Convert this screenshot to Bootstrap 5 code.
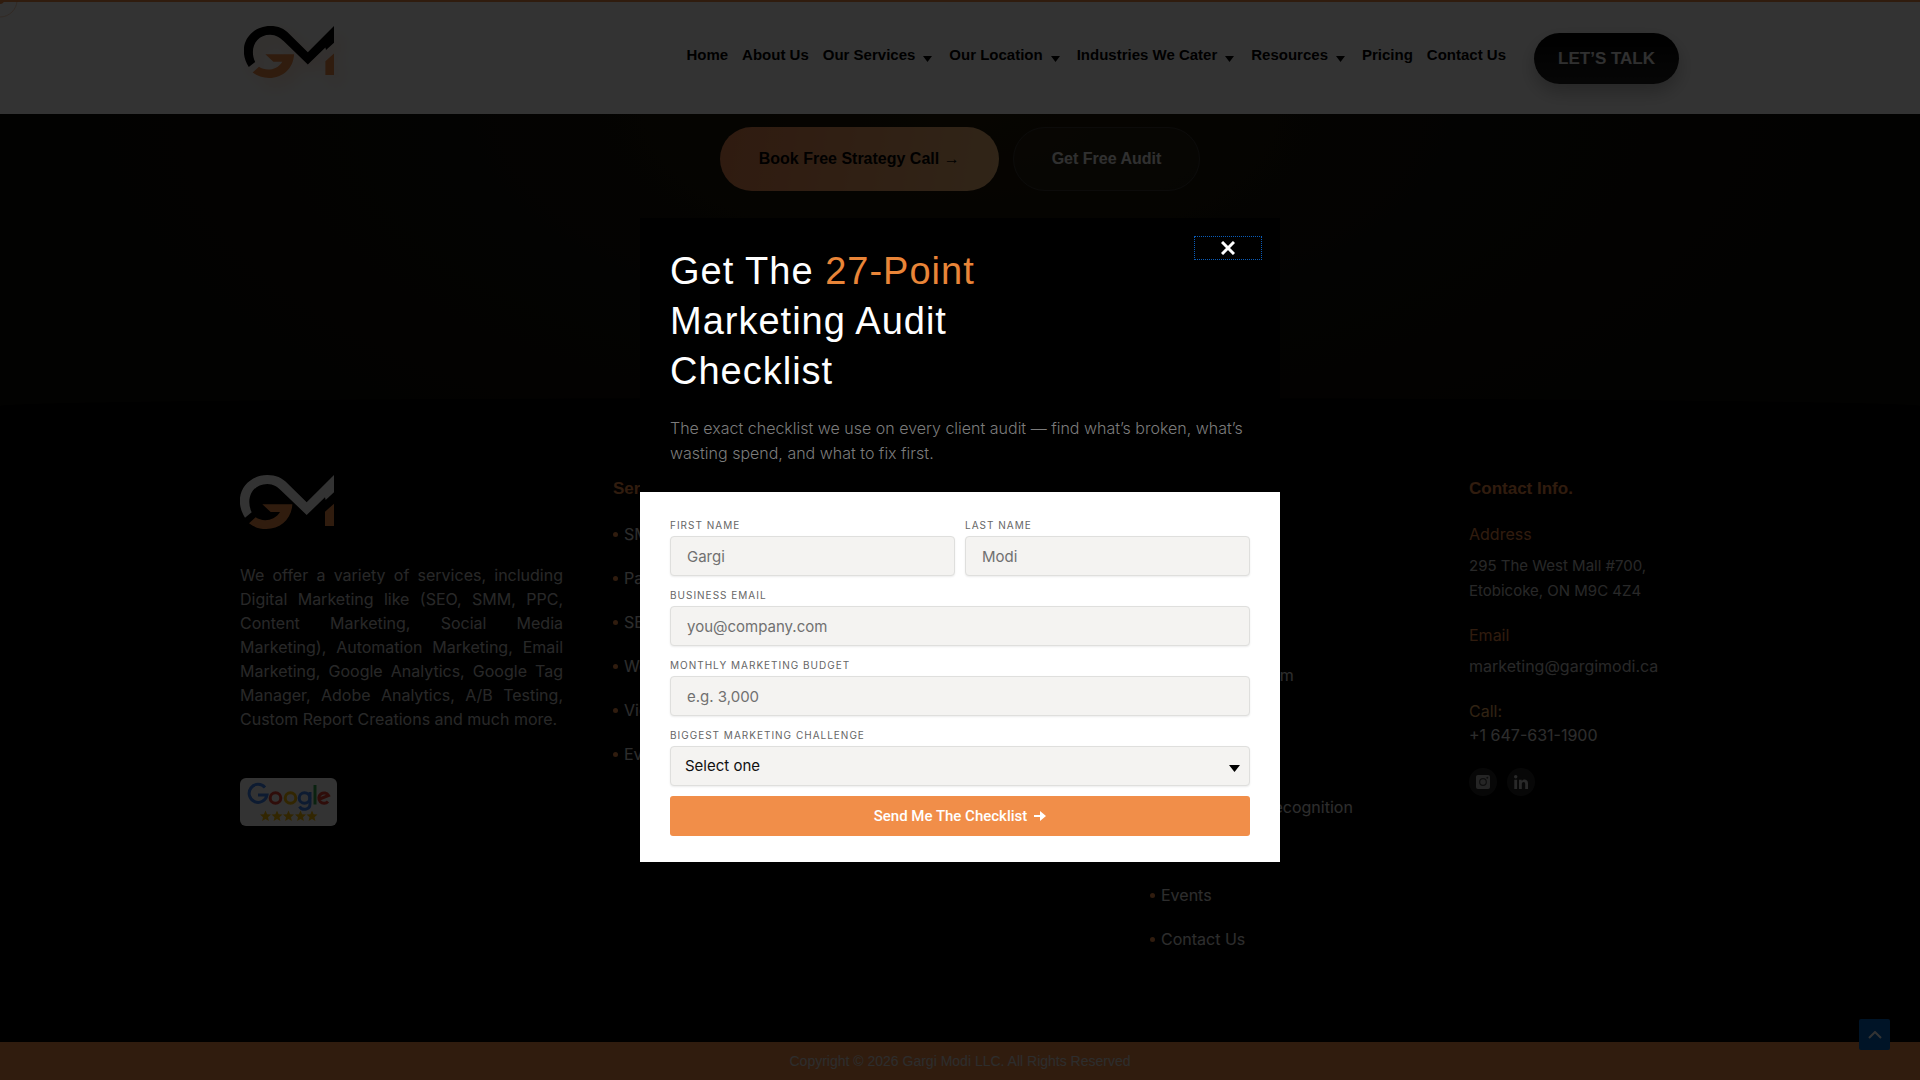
<!DOCTYPE html>
<html lang="en">
<head>
<meta charset="utf-8">
<meta name="viewport" content="width=device-width, initial-scale=1">
<title>Gargi Modi</title>
<link href="https://cdn.jsdelivr.net/npm/bootstrap@5.3.0/dist/css/bootstrap.min.css" rel="stylesheet">
<style>
:root{--brand:#ee8b48;--sans:"Liberation Sans",Arial,sans-serif;--geo:Inter,"Open Sans",sans-serif}
body{font-family:var(--geo);background:#000;min-height:100vh;overflow:hidden}
a{text-decoration:none}
.site-header{height:114px;background:#fff;border-top:2px solid var(--brand)}
.wrap{width:100%;max-width:1440px;margin:0 auto}
.site-header .wrap{padding:24px 1px 0 4px}
.logo-top{filter:drop-shadow(6px 8px 8px rgba(238,139,72,.25))}
.main-nav{gap:14px;font:700 15px/20px var(--sans);margin:19px 28px 0 0}
.main-nav a{color:#000}
.main-nav .has-menu{display:flex;gap:8px;padding-right:3px}
.main-nav svg{margin-top:11px}
.talk-btn{background:linear-gradient(#000,#222);color:#eee;border:0;border-radius:26px;padding:13px 24px;margin-top:7px;font:700 17px/25px var(--sans);box-shadow:0 8px 18px rgba(0,0,0,.25)}
.hero{height:292px;background:radial-gradient(ellipse 45% 130% at 50% 0,#241a08,#12100a 60%,#0e0c07);padding-top:13px;gap:14px}
.hero-btn{font:700 16px/24px var(--sans);padding:19px 38px;border-radius:32px;height:64px;border:1px solid transparent}
.hero-main{background:linear-gradient(100deg,#ec8650,#f0b878) border-box;color:#000}
.hero-alt{background:rgba(255,255,255,.04);border-color:#3c3a36;color:#f0f0f0}
.site-footer{background:#000;height:644px;margin-top:-8px;border-radius:50% 50% 0 0/8px 8px 0 0;position:relative}
.site-footer .wrap{padding:77px 0 0;display:grid;grid-template-columns:373px 537px 319px 1fr}
.about-text{width:323px;font-size:16px;line-height:24px;color:#c8c8c8;font-weight:400;margin:34px 0 47px}
.about-text span{display:block;text-align-last:justify;white-space:nowrap}
.about-text span:last-child{text-align-last:left}
.foot-title{font:700 17px/20px var(--sans);color:var(--brand);margin:4px 0 0}
.links{list-style:none;padding:0;margin:13px 0 0;font-weight:400;font-size:16px}
.links li{height:44px;display:flex;align-items:center;gap:6px}
.links li::before{content:"";width:5px;height:5px;border-radius:50%;background:var(--brand)}
.links a{color:#e0e0e0}
.links .later{margin-top:88px}
.links .next{margin-top:44px}
.links-more{margin-top:178px}
.contact-head{color:var(--brand);font-size:16px;font-weight:400;line-height:24px;margin:20px 0 0}
.contact-head.first{margin-top:23px}
.contact-head.call{color:#f0b060}
.contact-text{color:#c8c8c8;font-size:16px;line-height:25px;margin:7px 0 0;display:block}
.contact-text.phone{margin:0;color:#e0e0e0}
address.contact-text{font-size:15px}
.socials{gap:10px;margin-top:20px}
.soc{width:28px;height:28px;border-radius:50%;background:#262626;display:flex;align-items:center;justify-content:center}
.copy-bar{height:38px;background:var(--brand);font:14px/38px var(--sans);color:#e0e0e0;text-align:center}
.to-top{position:fixed;right:30px;bottom:30px;width:31px;height:31px;background:#0064c3;border:0;border-radius:2px;padding:0;display:flex;align-items:center;justify-content:center}
.ring{position:fixed;top:0;left:0}
.shade{position:fixed;inset:0;background:rgba(0,0,0,.8)}
.popup{position:fixed;inset:0;display:flex;align-items:center;justify-content:center}
.popup-box{width:640px}
.popup-top{background:#000;padding:28px 30px 26px;position:relative}
.popup-top h2{font:400 38px/50px var(--sans);letter-spacing:1px;color:#fff;margin:0 0 20px;max-width:340px}
.popup-top h2 em{font-style:normal;color:#e98538}
.popup-top p{font-size:16px;line-height:25px;font-weight:300;color:#7c7c7c;margin:0}
.x-btn{position:absolute;top:18px;right:18px;width:68px;height:24px;background:none;border:1px dotted #0a5cb8;padding:0;display:flex;align-items:center;justify-content:center}
.popup-form{background:#fff;padding:24px 30px 26px;display:grid;grid-template-columns:1fr 1fr;gap:10px}
.wide{grid-column:1/-1}
.popup-form label{display:block;font-size:10px;line-height:18px;letter-spacing:1px;font-weight:400;color:#666;text-transform:uppercase;margin-bottom:2px}
.popup-form .fld{display:block;width:100%;height:40px;background-color:#f4f3f1;border:1px solid #dfdfdd;border-radius:4px;padding:0 16px;font-size:15px;color:#111;box-shadow:0 1px 2px rgba(0,0,0,.08)}
.popup-form .fld::placeholder{color:#707070;opacity:1}
.popup-form select.fld{appearance:none;padding-left:14px}
.pick{position:relative}
.pick svg{position:absolute;right:10px;top:19px;pointer-events:none}
.send-btn{height:40px;background:#f18e49;color:#fff;border:0;border-radius:3px;font:500 15px/20px Roboto,sans-serif;display:flex;align-items:center;justify-content:center;gap:7px}
</style>
</head>
<body>
<svg width="0" height="0" class="position-absolute" aria-hidden="true">
<symbol id="gm-line" viewBox="0 0 282 162"><path d="M15 128C-26 62 20 0 82 0c26 0 44 8 60 25l58 57 82-82v52l-25 23-2-8-55 53-76-73C114 37 100 27 82 27 36 27 16 72 35 112z"/></symbol>
<symbol id="gm-accent" viewBox="0 0 282 162"><path d="M67 88h90c-2 44-36 74-78 74-20 0-38-6-52-17l20-18c20 14 56 12 73-16H92zM255 110l27-24v67h-27z"/></symbol>
<symbol id="caret" viewBox="0 0 9 6"><path d="M0 0h9L4.500 6z"/></symbol>
</svg>
<header class="site-header">
 <div class="wrap d-flex align-items-start">
  <a href="#" class="me-auto" aria-label="Home page"><svg class="logo-top d-block" width="90" height="52" viewBox="0 0 282 162" preserveAspectRatio="none"><use href="#gm-line" fill="#000"/><use href="#gm-accent" fill="#ee8b48"/></svg></a>
  <nav class="main-nav d-flex">
   <a href="#">Home</a><a href="#">About Us</a>
   <a href="#" class="has-menu">Our Services <svg width="9" height="6"><use href="#caret"/></svg></a>
   <a href="#" class="has-menu">Our Location <svg width="9" height="6"><use href="#caret"/></svg></a>
   <a href="#" class="has-menu">Industries We Cater <svg width="9" height="6"><use href="#caret"/></svg></a>
   <a href="#" class="has-menu">Resources <svg width="9" height="6"><use href="#caret"/></svg></a>
   <a href="#">Pricing</a><a href="#">Contact Us</a>
  </nav>
  <button class="talk-btn" type="button">LET’S TALK</button>
 </div>
</header>
<section class="hero d-flex justify-content-center align-items-start">
 <a href="#" class="hero-btn hero-main">Book Free Strategy Call →</a>
 <a href="#" class="hero-btn hero-alt">Get Free Audit</a>
</section>
<footer class="site-footer">
 <div class="wrap">
  <div>
   <svg class="d-block" width="94" height="54" viewBox="0 0 282 162"><use href="#gm-line" fill="#fff"/><use href="#gm-accent" fill="#ee8b48"/></svg>
   <p class="about-text"><span>We offer a variety of services, including</span><span>Digital Marketing like (SEO, SMM, PPC,</span><span>Content Marketing, Social Media</span><span>Marketing), Automation Marketing, Email</span><span>Marketing, Google Analytics, Google Tag</span><span>Manager, Adobe Analytics, A/B Testing,</span><span>Custom Report Creations and much more.</span></p>
   <svg class="d-block" width="97" height="48" viewBox="0 0 97 48" role="img" aria-label="Google reviews"><rect width="97" height="48" rx="6" fill="#fff"/>
    <g fill="none" stroke-width="3"><path d="M25 9.500A9 9 0 1 0 27 17H18" stroke="#4285f4"/><circle cx="35.500" cy="20" r="5.300" stroke="#ea4335"/><circle cx="50.500" cy="20" r="5.300" stroke="#fbbc05"/><circle cx="64.500" cy="20" r="5.300" stroke="#4285f4"/><path d="M70 14v12c0 6-8 7-10.500 2.500" stroke="#4285f4"/><path d="M75 7v19.500" stroke="#34a853"/><path d="M78.500 21.500l10-4A5.200 5.200 0 1 0 88 23.500" stroke="#ea4335"/></g>
    <defs><path id="st" d="M0-5.500 1.600-1.700 5.500-1.500 2.500 1.200 3.400 5 0 2.900-3.400 5-2.500 1.200-5.500-1.500-1.600-1.700z"/></defs>
    <g fill="#fbbc05"><use href="#st" x="25.500" y="38"/><use href="#st" x="37" y="38"/><use href="#st" x="48.500" y="38"/><use href="#st" x="60.500" y="38"/><use href="#st" x="72" y="38"/></g></svg>
  </div>
  <div>
   <h3 class="foot-title">Services</h3>
   <ul class="links"><li><a href="#">SMM</a></li><li><a href="#">Paid</a></li><li><a href="#">SEO</a></li><li><a href="#">Web</a></li><li><a href="#">Video</a></li><li><a href="#">Events</a></li></ul>
  </div>
  <ul class="links links-more"><li><a href="#">Partners Program</a></li><li class="later"><a href="#">Rewards and Recognition</a></li><li class="next"><a href="#">Events</a></li><li><a href="#">Contact Us</a></li></ul>
  <div>
   <h3 class="foot-title">Contact Info.</h3>
   <h4 class="contact-head first">Address</h4>
   <address class="contact-text mb-0">295 The West Mall #700,<br>Etobicoke, ON M9C 4Z4</address>
   <h4 class="contact-head">Email</h4>
   <a class="contact-text" href="#">marketing@gargimodi.ca</a>
   <h4 class="contact-head call">Call:</h4>
   <a class="contact-text phone" href="#">+1 647-631-1900</a>
   <div class="socials d-flex">
    <a href="#" class="soc" aria-label="Instagram"><svg width="14" height="14"><rect width="14" height="14" rx="2" fill="#bbb"/><circle cx="7" cy="7" r="3.300" fill="none" stroke="#444" stroke-width="1.200"/><circle cx="11.300" cy="2.700" r="1" fill="#444"/></svg></a>
    <a href="#" class="soc" aria-label="LinkedIn"><svg width="14" height="14" fill="#ccc"><circle cx="1.700" cy="1.700" r="1.700"/><path d="M.3 4.700h2.800V14H.3zM5 4.700h2.700V6c1.400-2.400 6.300-2.200 6.300 2.200V14h-2.800V9c0-2.800-3.400-2.600-3.400 0v5H5z"/></svg></a>
   </div>
  </div>
 </div>
</footer>
<div class="copy-bar">Copyright © 2026 Gargi Modi LLC. All Rights Reserved</div>
<button class="to-top" type="button" aria-label="Back to top"><svg width="14" height="8" fill="none" stroke="#fff" stroke-width="2"><path d="M1 7l6-6 6 6"/></svg></button>
<svg class="ring" width="20" height="20" aria-hidden="true"><circle r="17" fill="none" stroke="#ee8b48" stroke-opacity=".4"/><circle r="4" fill="#ee8b48"/></svg>
<div class="shade"></div>
<div class="popup"><div class="popup-box" role="dialog" aria-modal="true" aria-labelledby="pt">
 <div class="popup-top">
  <h2 id="pt">Get The <em>27-Point</em> Marketing Audit Checklist</h2>
  <p>The exact checklist we use on every client audit — find what’s broken, what’s wasting spend, and what to fix first.</p>
  <button class="x-btn" type="button" aria-label="Close"><svg width="14" height="14" stroke="#fff" stroke-width="3"><path d="M1 1l12 12M13 1L1 13"/></svg></button>
 </div>
 <form class="popup-form">
  <div><label for="fn">First name</label><input class="fld" id="fn" type="text" placeholder="Gargi"></div>
  <div><label for="ln">Last name</label><input class="fld" id="ln" type="text" placeholder="Modi"></div>
  <div class="wide"><label for="em">Business email</label><input class="fld" id="em" type="email" placeholder="you@company.com"></div>
  <div class="wide"><label for="bu">Monthly marketing budget</label><input class="fld" id="bu" type="text" placeholder="e.g. 3,000"></div>
  <div class="wide"><label for="ch">Biggest marketing challenge</label><div class="pick"><select class="fld" id="ch"><option>Select one</option></select><svg width="11" height="7"><path d="M0 0h11L5.500 7z"/></svg></div></div>
  <button class="send-btn wide" type="submit">Send Me The Checklist <svg width="12" height="12"><path d="M0 5h6V1l6 5-6 5V7H0z" fill="#fff"/></svg></button>
 </form>
</div></div>
<script src="https://cdn.jsdelivr.net/npm/bootstrap@5.3.0/dist/js/bootstrap.bundle.min.js"></script>
</body>
</html>
